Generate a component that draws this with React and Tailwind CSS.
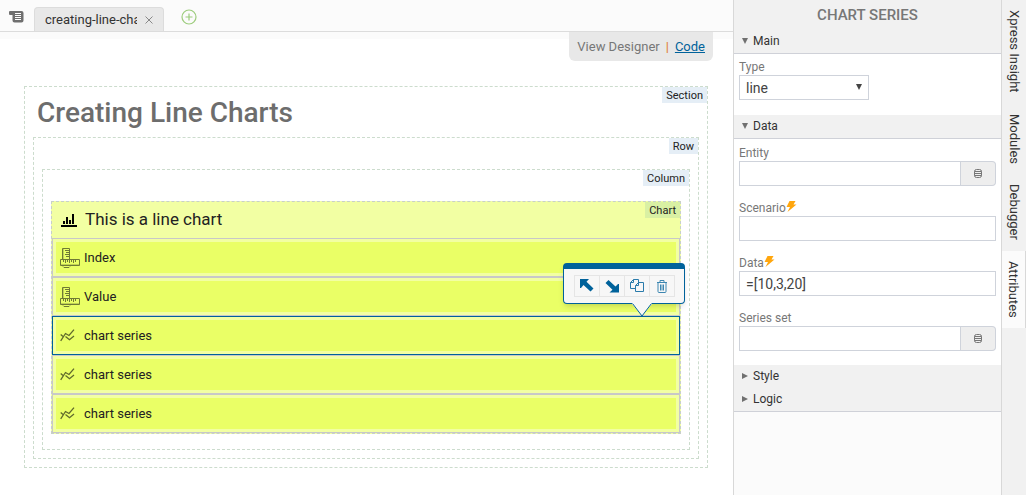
import { useState } from "react";

const ITEMS = [
  { id: 1, label: "Index", kind: "ruler" },
  { id: 2, label: "Value", kind: "ruler" },
  { id: 3, label: "chart series", kind: "series" },
  { id: 4, label: "chart series", kind: "series" },
  { id: 5, label: "chart series", kind: "series" },
];

const SIDE_TABS = ["Xpress Insight", "Modules", "Debugger", "Attributes"];

function MenuIcon() {
  return (
    <svg width="15" height="12" viewBox="0 0 15 12" aria-hidden="true">
      <path d="M1 0h11.500q2 0 2 2v7.500q0 2-2 2h-7q-2 0-2-2V4H1Q0 4 0 2.500V1Q0 0 1 0z" fill="#6f6f6f" />
      <path d="M6 2.500h6M6 4.500h6M6 6.500h6M6 8.500h6" stroke="#fff" />
    </svg>
  );
}

function AddIcon() {
  return (
    <svg width="16" height="16" viewBox="0 0 16 16" fill="none" stroke="#9ccc7c" aria-hidden="true">
      <circle cx="8" cy="8" r="7" strokeWidth="1.200" />
      <path d="M8 4.500v7M4.500 8h7" strokeWidth="1.200" />
    </svg>
  );
}

function ChartIcon() {
  return (
    <svg width="16" height="13" viewBox="0 0 16 13" fill="#000" aria-hidden="true">
      <path d="M0 11h16v2H0zM2 7h2v3H2zM5 3h2v7H5zM8 6h2v4H8zM11 0h2v10h-2z" />
    </svg>
  );
}

function RulerIcon() {
  return (
    <svg width="20" height="20" viewBox="0 0 20 20" fill="none" stroke="#6f7a35" aria-hidden="true">
      <path d="M2.500 11V.5h7V11M.5 11.500h19v6H.5zM3 18.500l1 1h5l1-1" />
      <path d="M5 2.500h4M6 4.500h3M5 6.500h4M6 8.500h3M3.500 12v2M5.500 12v3M7.500 12v2M9.500 12v3M11.500 12v2M13.500 12v3M15.500 12v2" />
      <path d="M3.500 1v10M1 16.500h18" strokeOpacity=".35" />
    </svg>
  );
}

function SeriesIcon() {
  return (
    <svg width="15" height="13" viewBox="0 0 15 13" fill="none" stroke="#5f6a2c" strokeWidth="1.300" aria-hidden="true">
      <path d="M.7 11.800 5.500 4.500l3.500 2L14 .7" />
      <path d="M.7 5.500 3 7.500M5.500 7.500l4 3.200L14 7" />
    </svg>
  );
}

function BoltIcon() {
  return (
    <svg width="11" height="11" viewBox="0 0 11 11" fill="#ffa60d" aria-hidden="true">
      <path d="M3.500 0h6L7.500 3.500h3L1.500 11l2.500-5H.5z" />
    </svg>
  );
}

function DatabaseIcon() {
  return (
    <svg width="8" height="9" viewBox="0 0 8 9" fill="none" stroke="#777" aria-hidden="true">
      <rect x=".5" y=".5" width="7" height="8" rx="2" />
      <path d="M.5 2.500h7M.5 4.500h7M.5 6.500h7" />
    </svg>
  );
}

function ArrowUpLeft() {
  return (
    <svg width="14" height="14" viewBox="0 0 14 14" fill="#00629b" aria-hidden="true">
      <path d="M0 0h9L6.500 2.800l7 6.700-3 3-7-6.500L1 9H0z" />
    </svg>
  );
}

function ArrowDownRight() {
  return (
    <svg width="14" height="14" viewBox="0 0 14 14" fill="#00629b" aria-hidden="true">
      <path d="M14 13.500H4.500l3-2.800L.5 4l3-3 7 6.500L13 5h1z" />
    </svg>
  );
}

function CopyIcon() {
  return (
    <svg width="14" height="14" viewBox="0 0 14 14" fill="none" stroke="#2a7bab" aria-hidden="true">
      <path d="M5 9.500H.5v-6l3-3h5V4M3.500.5v3h-3" />
      <path d="M8.500 3.500h5v9h-8v-6zM8.500 3.500v3h-3" />
    </svg>
  );
}

function TrashIcon() {
  return (
    <svg width="12" height="13" viewBox="0 0 12 13" fill="none" stroke="#3c86b1" aria-hidden="true">
      <path d="M1 2.500h10M4 2V.5h4V2M2 3v8.500q0 1 1 1h6q1 0 1-1V3" />
      <path d="M4.500 4.500v6M6 4.500v6M7.500 4.500v6" />
    </svg>
  );
}

function Tag({ children, className = "bg-[#e5eef6]" }) {
  return (
    <span className={`absolute right-0 top-0 h-4 px-1 text-[11px] leading-[18px] text-[#222] ${className}`}>
      {children}
    </span>
  );
}

function ToolButton({ label, children }) {
  return (
    <button
      type="button"
      aria-label={label}
      className="-ml-px flex h-[22px] w-[26px] items-center justify-center border border-[#e5e5e5]"
    >
      {children}
    </button>
  );
}

function ItemToolbar() {
  return (
    <div className="absolute -top-[54px] -right-[6px] z-10 rounded-sm border border-t-[6px] border-[#00629b] bg-[#f7f7f7] py-1.5 pr-[9px] pl-[11px] shadow-md">
      <div className="flex">
        <ToolButton label="Move up"><ArrowUpLeft /></ToolButton>
        <ToolButton label="Move down"><ArrowDownRight /></ToolButton>
        <ToolButton label="Copy"><CopyIcon /></ToolButton>
        <ToolButton label="Delete"><TrashIcon /></ToolButton>
      </div>
      <svg className="absolute top-[34px] right-[32px]" width="20" height="14" viewBox="0 0 20 14" aria-hidden="true">
        <path d="M0 0h20v1L10 13 0 1z" fill="#f7f7f7" />
        <path d="M.5.5 10 13 19.500.5" fill="none" stroke="#00629b" />
      </svg>
    </div>
  );
}

function ChartItem({ item, selected, onSelect }) {
  return (
    <li
      onClick={onSelect}
      className={`relative border bg-[#f2ffa3] p-[3px] ${selected ? "border-[#00629b]" : "border-[#c8c8c8]"}`}
    >
      <div className="flex h-[31px] items-center bg-[#eaff66] pl-1 text-[13px] text-[#222]">
        <span className="w-6">{item.kind === "ruler" ? <RulerIcon /> : <SeriesIcon />}</span>
        {item.label}
      </div>
      {selected && <ItemToolbar />}
    </li>
  );
}

function Designer() {
  const [selected, setSelected] = useState(3);

  return (
    <section className="relative mt-[25px] mr-[25px] ml-6 border border-dashed border-[#ccdccd] p-2">
      <Tag>Section</Tag>
      <h1 className="h-[42px] pl-1 text-[28px] leading-9 font-medium text-[#6d6d6d]">
        Creating Line Charts
      </h1>
      <div className="relative border border-dashed border-[#ccdccd] px-2 pt-[31px] pb-2">
        <Tag>Row</Tag>
        <div className="relative border border-dashed border-[#ccdccd] px-2 pt-[31px] pb-[15px]">
          <Tag>Column</Tag>
          <div className="relative border border-dashed border-[#c8d0c8] bg-[#f2ffa3]">
            <Tag className="bg-[#d9f0a3]">Chart</Tag>
            <h2 className="flex h-9 items-center gap-2 pl-[9px] text-[17px] text-[#222]">
              <ChartIcon />
              This is a line chart
            </h2>
            <ul>
              {ITEMS.map((item) => (
                <ChartItem
                  key={item.id}
                  item={item}
                  selected={item.id === selected}
                  onSelect={() => setSelected(item.id)}
                />
              ))}
            </ul>
          </div>
        </div>
      </div>
    </section>
  );
}

function GroupHeader({ title, open, last = true }) {
  return (
    <button
      type="button"
      aria-expanded={open}
      className={`flex w-full items-center bg-[#f1f1f1] pb-px pl-2 text-left text-xs text-[#333] ${last ? "h-6 border-b border-[#cfd1d8]" : "h-[23px]"}`}
    >
      <svg width="6" height="6" viewBox="0 0 6 6" fill="#707070" className="mr-[5px]" aria-hidden="true">
        {open ? <path d="M0 0h6L3 6z" /> : <path d="M0 0v6l6-3z" />}
      </svg>
      {title}
    </button>
  );
}

function Field({ id, label, dynamic, lookup, defaultValue = "" }) {
  return (
    <div className="mb-[9px]">
      <label htmlFor={id} className="flex h-[21px] items-center pt-1 text-xs text-[#777]">
        {label}
        {dynamic && (
          <span className="pb-0.5">
            <BoltIcon />
          </span>
        )}
      </label>
      <div className="flex h-[25px]">
        <input
          id={id}
          type="text"
          defaultValue={defaultValue}
          className="min-w-0 flex-1 border border-[#cfd3db] bg-white px-1.5 text-sm text-[#444] outline-none"
        />
        {lookup && (
          <button
            type="button"
            aria-label={`Choose ${label}`}
            className="flex w-[35px] items-center justify-center rounded-r border border-l-0 border-[#cfd3db] bg-[#eee]"
          >
            <DatabaseIcon />
          </button>
        )}
      </div>
    </div>
  );
}

function AttributesPanel() {
  return (
    <aside className="w-[269px] shrink-0 border-x border-[#d8d8d8] bg-[#fbfbfb]">
      <h2 className="h-[30px] bg-[#f1f1f1] text-center text-[15px] leading-[30px] font-medium text-[#777]">
        CHART SERIES
      </h2>
      <GroupHeader title="Main" open />
      <div className="bg-white px-[5px] pb-[15px]">
        <label htmlFor="type" className="flex h-[21px] items-center pt-1 text-xs text-[#777]">
          Type
        </label>
        <div className="relative w-[130px]">
          <select
            id="type"
            defaultValue="line"
            className="block h-[25px] w-full appearance-none border border-[#cfd3db] bg-white px-1.5 text-sm text-[#444] outline-none"
          >
            <option value="line">line</option>
            <option value="bar">bar</option>
            <option value="scatter">scatter</option>
          </select>
          <svg className="pointer-events-none absolute top-[9px] right-[7px]" width="6" height="6" viewBox="0 0 6 6" fill="#444" aria-hidden="true">
            <path d="M0 0h6L3 6z" />
          </svg>
        </div>
      </div>
      <GroupHeader title="Data" open />
      <div className="bg-white px-[5px] pt-px pb-[5px]">
        <Field id="entity" label="Entity" lookup />
        <Field id="scenario" label="Scenario" dynamic />
        <Field id="data" label="Data" dynamic defaultValue="=[10,3,20]" />
        <Field id="series-set" label="Series set" lookup />
      </div>
      <GroupHeader title="Style" last={false} />
      <GroupHeader title="Logic" />
    </aside>
  );
}

function SideTabs() {
  return (
    <nav className="flex w-6 shrink-0 flex-col bg-[#f1f1f1] text-[13px] text-[#333]">
      {SIDE_TABS.map((tab) => (
        <button
          key={tab}
          type="button"
          className={`flex items-center justify-start px-0.5 pt-2.5 [writing-mode:vertical-rl] ${
            tab === "Attributes"
              ? "-ml-px mt-px h-[77px] border-y border-[#d8d8d8] bg-[#fbfbfb]"
              : tab === "Xpress Insight"
                ? "h-[104px]"
                : tab === "Modules"
                  ? "h-[70px]"
                  : "h-[76px]"
          }`}
        >
          {tab}
        </button>
      ))}
    </nav>
  );
}

export default function App() {
  return (
    <div className="flex min-h-screen bg-white font-[Roboto,sans-serif]">
      <main className="min-w-0 flex-1">
        <div className="flex h-8 items-end border-b border-[#dcdcdc] bg-[#fbfbfb] pl-[9px]">
          <button type="button" aria-label="File list" className="mr-2.5 mb-2">
            <MenuIcon />
          </button>
          <div className="flex h-6 w-[130px] items-center rounded-t border border-b-0 border-[#dcdcdc] bg-[#e8e8e8] pl-2.5">
            <span className="w-[92px] overflow-hidden text-[13px] whitespace-nowrap text-[#333]">
              creating-line-chart
            </span>
            <button type="button" aria-label="Close tab" className="ml-2">
              <svg width="8" height="8" viewBox="0 0 8 8" stroke="#888" aria-hidden="true">
                <path d="M.5.5l7 7M7.500.5l-7 7" />
              </svg>
            </button>
          </div>
          <button type="button" aria-label="New tab" className="mb-1.5 ml-[17px]">
            <AddIcon />
          </button>
        </div>
        <div className="flex h-[29px] justify-end bg-linear-to-b from-[#fbfbfb] from-[7px] to-white to-[7px] pr-5">
          <div className="flex items-center gap-1.5 rounded-b-md bg-[#e8e8e8] px-2 text-[13px] text-[#777]">
            <span>View Designer</span>
            <span className="text-[#e07a1f]">|</span>
            <a href="#code" className="text-[#00629b] underline">Code</a>
          </div>
        </div>
        <Designer />
      </main>
      <AttributesPanel />
      <SideTabs />
    </div>
  );
}
